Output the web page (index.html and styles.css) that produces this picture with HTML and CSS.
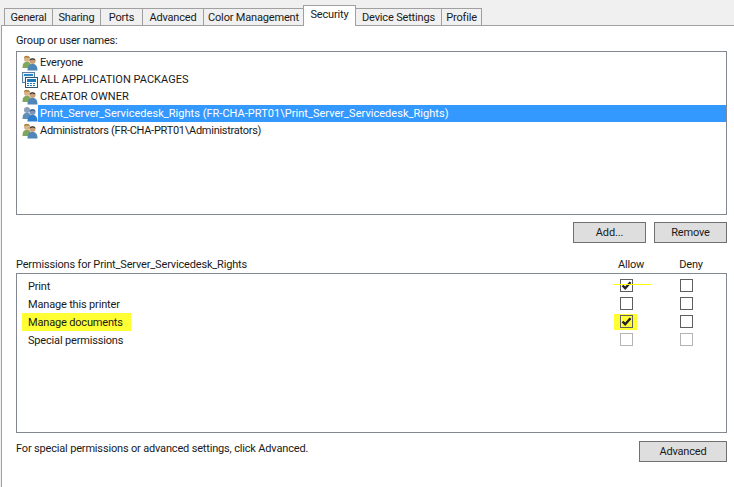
FILE: index.html
```html
<!DOCTYPE html>
<html>
<head>
  <meta charset="utf-8">
  <title>Printer Properties</title>
  <link rel="stylesheet" href="styles.css">
</head>
<body>
  <svg class="defs" width="0" height="0">
    <symbol id="users" viewBox="0 0 16 16">
      <circle cx="5" cy="4" r="3" fill="#d9b38a"/>
      <path d="M2 3 C2 0 7 0 8 3 L5 2.5Z" fill="#a8843f"/>
      <path d="M0.5 13 C0.5 8 2 7 5 7 C8 7 9 8 9 13Z" fill="#7fa65a"/>
      <circle cx="10.5" cy="6" r="3" fill="#c99f7a"/>
      <path d="M7.5 5.5 C8 2.5 13 2.5 13.5 5.5 L10.5 4.5Z" fill="#3d3a38"/>
      <path d="M5.5 15.5 C5.5 10.5 7.5 9 10.5 9 C13.5 9 15.5 10.5 15.5 15.5Z" fill="#4f86b8"/>
    </symbol>
    <symbol id="users-sel" viewBox="0 0 16 16">
      <circle cx="5" cy="4" r="3" fill="#8aa0bd"/>
      <path d="M0.5 13 C0.5 8 2 7 5 7 C8 7 9 8 9 13Z" fill="#5f8fb5"/>
      <circle cx="10.5" cy="6" r="3" fill="#7d94b5"/>
      <path d="M7.5 5.5 C8 2.5 13 2.5 13.5 5.5 L10.5 4.5Z" fill="#3f5d85"/>
      <path d="M5.5 15.5 C5.5 10.5 7.5 9 10.5 9 C13.5 9 15.5 10.5 15.5 15.5Z" fill="#2f7fd0"/>
    </symbol>
    <symbol id="packages" viewBox="0 0 16 16">
      <rect x="0.5" y="0.5" width="12" height="10" fill="#e8f2fb" stroke="#5a7f9f"/>
      <rect x="2" y="2" width="9" height="2" fill="#2f86c8"/>
      <rect x="3.5" y="5.5" width="12" height="10" fill="#fff" stroke="#33566f"/>
      <rect x="5" y="7" width="9" height="3" fill="#1f79bd"/>
      <rect x="5" y="11" width="2" height="1" fill="#1f79bd"/>
      <rect x="8" y="11" width="2" height="1" fill="#1f79bd"/>
      <rect x="11" y="11" width="2" height="1" fill="#1f79bd"/>
      <rect x="5" y="13" width="2" height="1" fill="#1f79bd"/>
      <rect x="8" y="13" width="2" height="1" fill="#1f79bd"/>
      <rect x="11" y="13" width="2" height="1" fill="#1f79bd"/>
    </symbol>
    <symbol id="tick" viewBox="0 0 11 11">
      <path d="M1.5 5.5 L4.2 8.2 L9.5 2.2" fill="none" stroke="#222" stroke-width="2.4"/>
    </symbol>
  </svg>

  <div class="tabs">
    <div class="tab tab-general">General</div>
    <div class="tab tab-sharing">Sharing</div>
    <div class="tab tab-ports">Ports</div>
    <div class="tab tab-advanced">Advanced</div>
    <div class="tab tab-color">Color Management</div>
    <div class="tab tab-security active">Security</div>
    <div class="tab tab-device">Device Settings</div>
    <div class="tab tab-profile">Profile</div>
  </div>

  <div class="panel">
    <div class="group-label">Group or user names:</div>
    <div class="names-box">
      <div class="name-row"><svg class="icon"><use href="#users"/></svg><span class="name">Everyone</span></div>
      <div class="name-row caps"><svg class="icon"><use href="#packages"/></svg><span class="name">ALL APPLICATION PACKAGES</span></div>
      <div class="name-row caps"><svg class="icon"><use href="#users"/></svg><span class="name">CREATOR OWNER</span></div>
      <div class="name-row selected"><svg class="icon"><use href="#users-sel"/></svg><span class="name">Print_Server_Servicedesk_Rights (FR-CHA-PRT01\Print_Server_Servicedesk_Rights)</span></div>
      <div class="name-row admins"><svg class="icon"><use href="#users"/></svg><span class="name">Administrators (FR-CHA-PRT01\Administrators)</span></div>
    </div>

    <div class="button-row">
      <div class="btn btn-small">Add...</div>
      <div class="btn btn-small">Remove</div>
    </div>

    <div class="perm-head">
      <div class="perm-title">Permissions for Print_Server_Servicedesk_Rights</div>
      <div class="perm-col">Allow</div>
      <div class="perm-col">Deny</div>
    </div>
    <div class="perm-box">
      <div class="perm-row">
        <div class="perm-name"><span>Print</span></div>
        <div class="perm-cell"><div class="check"><svg class="tick"><use href="#tick"/></svg></div><div class="marker-line"></div></div>
        <div class="perm-cell"><div class="check"></div></div>
      </div>
      <div class="perm-row">
        <div class="perm-name"><span>Manage this printer</span></div>
        <div class="perm-cell"><div class="check"></div></div>
        <div class="perm-cell"><div class="check"></div></div>
      </div>
      <div class="perm-row">
        <div class="perm-name"><span class="marked">Manage documents</span></div>
        <div class="perm-cell"><div class="marker-box"></div><div class="check on-marker"><svg class="tick"><use href="#tick"/></svg></div></div>
        <div class="perm-cell"><div class="check"></div></div>
      </div>
      <div class="perm-row">
        <div class="perm-name"><span>Special permissions</span></div>
        <div class="perm-cell"><div class="check disabled"></div></div>
        <div class="perm-cell"><div class="check disabled"></div></div>
      </div>
    </div>

    <div class="footer-row">
      <div class="footer-text">For special permissions or advanced settings, click Advanced.</div>
      <div class="btn btn-wide">Advanced</div>
    </div>
  </div>
</body>
</html>
```

FILE: styles.css
```css
body {
  font-family: Roboto, "Liberation Sans", Arial, sans-serif;
  font-size: 11px;
  letter-spacing: -0.17px;
  color: #1a1a1a;
  background-color: #f0f0f0;
  margin: 0;
  height: 487px;
  overflow: hidden;
}

.defs {
  display: block;
  height: 0;
}

.tabs {
  display: flex;
  align-items: flex-end;
  height: 25px;
  padding-left: 4px;
}

.tab {
  box-sizing: border-box;
  height: 17px;
  border: 1px solid #a0a0a0;
  border-bottom: none;
  border-right: none;
  text-align: center;
  line-height: 17px;
  white-space: nowrap;
  background-color: #f0f0f0;
}

.tab-general { width: 48px; }
.tab-sharing { width: 48px; }
.tab-ports { width: 42px; }
.tab-advanced { width: 61px; }
.tab-color { width: 100px; }
.tab-device { width: 85px; }
.tab-profile { width: 41px; border-right: 1px solid #a0a0a0; }

.tab.active {
  width: 53px;
  height: 21px;
  margin-bottom: -1px;
  border-right: 1px solid #a0a0a0;
  background-color: #fff;
  line-height: 17px;
  position: relative;
}

.tab-device {
  border-left: none;
}

.panel {
  box-sizing: border-box;
  height: 462px;
  margin-left: 1px;
  padding: 0 7px 0 14px;
  background-color: #fff;
  border-top: 1px solid #a0a0a0;
  border-left: 1px solid #a0a0a0;
}

.group-label {
  height: 25px;
  line-height: 29px;
}

.names-box {
  box-sizing: border-box;
  height: 164px;
  padding: 2px 0 0 1px;
  border: 1px solid #828790;
}

.name-row {
  display: flex;
  align-items: center;
  height: 17px;
}

.icon {
  width: 16px;
  height: 16px;
  margin-left: 4px;
  flex: none;
}

.name {
  flex: 1;
  height: 17px;
  line-height: 17px;
  padding-left: 2px;
}

.caps .name {
  letter-spacing: 0.03px;
}

.admins .name {
  letter-spacing: -0.27px;
}

.selected .name {
  background-color: #3399ff;
  color: #fff;
  letter-spacing: 0.03px;
}

.button-row {
  display: flex;
  justify-content: flex-end;
  gap: 8px;
  margin-top: 7px;
}

.btn {
  box-sizing: border-box;
  height: 21px;
  line-height: 19px;
  border: 1px solid #707070;
  background-color: #dedede;
  text-align: center;
}

.btn-small { width: 73px; }
.btn-wide { width: 88px; }

.perm-head {
  display: flex;
  height: 30px;
  line-height: 14px;
  padding-top: 15px;
  box-sizing: border-box;
}

.perm-title {
  flex: 1;
}

.perm-col {
  width: 60px;
  text-align: center;
}

.perm-col:last-child {
  margin-right: 6px;
}

.perm-box {
  box-sizing: border-box;
  height: 160px;
  padding-top: 3px;
  border: 1px solid #828790;
}

.perm-row {
  display: flex;
  height: 18px;
}

.perm-name {
  flex: 1;
  padding-left: 11px;
}

.perm-name span {
  display: inline-block;
  height: 18px;
  line-height: 20px;
}

.perm-name .marked {
  background-color: #ffff33;
  margin-left: -6px;
  padding: 0 8px 0 6px;
}

.perm-cell {
  position: relative;
  width: 60px;
  padding: 2px 0 0 24px;
  box-sizing: border-box;
}

.perm-cell:last-child {
  margin-right: 10px;
}

.check {
  position: relative;
  box-sizing: border-box;
  width: 13px;
  height: 13px;
  border: 1px solid #5f5f5f;
  background-color: #fff;
}

.check.disabled {
  border-color: #b4b4b4;
}

.check.on-marker {
  background-color: #ffff33;
}

.tick {
  display: block;
  width: 11px;
  height: 11px;
}

/* yellow marker scribbles over the screenshot */
.marker-line {
  position: absolute;
  left: 17px;
  top: 7px;
  width: 38px;
  height: 1px;
  background-color: #ffff00;
}

.marker-box {
  position: absolute;
  left: 18px;
  top: 1px;
  width: 23px;
  height: 16px;
  background-color: #ffff33;
}

.footer-row {
  display: flex;
  justify-content: space-between;
  margin-top: 8px;
}

.footer-text {
  line-height: 14px;
  margin-top: 1px;
}
```
